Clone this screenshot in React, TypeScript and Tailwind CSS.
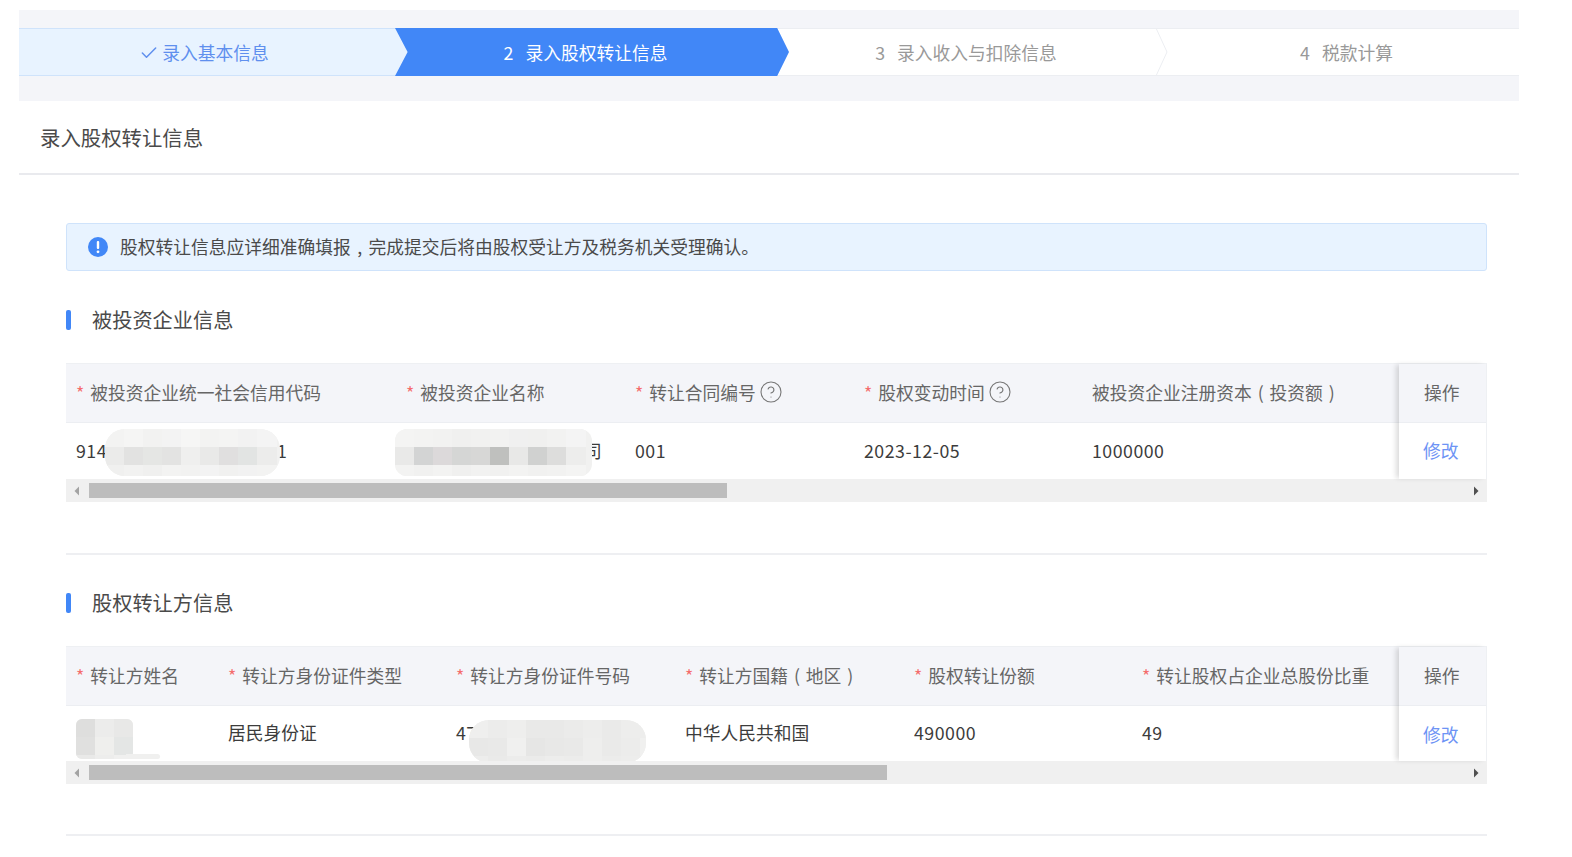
import React from 'react';
import { Check, CircleHelp } from 'lucide-react';

type Col = { label: string; width: string; required?: boolean; help?: boolean; value?: string; numeric?: boolean; mosaic?: React.ReactNode };

// pixelated patch hiding private values
const Mosaic: React.FC<{ className: string; w: number; h: number; rows: string[][]; size?: number; radius?: number }> = ({ className, w, h, rows, size = 19, radius = 20 }) => (
  <svg className={`absolute ${className}`} width={w} height={h} viewBox={`0 0 ${w} ${h}`}>
    <defs>
      <clipPath id={`m-${w}-${h}`}>
        <rect width={w} height={h} rx={radius} />
      </clipPath>
    </defs>
    <g clipPath={`url(#m-${w}-${h})`}>
      <rect width={w} height={h} fill="#f1f1f0" />
      {rows.map((row, y) =>
        row.map((c, x) => <rect key={`${x}-${y}`} x={x * size} y={y * 18} width={size + 1} height={19} fill={c} />)
      )}
    </g>
  </svg>
);

const ScrollArrow: React.FC<{ right?: boolean }> = ({ right }) => (
  <svg width="6" height="10" viewBox="0 0 6 10" className={right ? 'text-[#505050]' : 'text-[#a3a3a3]'}>
    <path d={right ? 'M1 0.5 L5.5 5 L1 9.5 Z' : 'M5 0.5 L0.5 5 L5 9.5 Z'} fill="currentColor" />
  </svg>
);

// the brackets sit centred in a full-width box in the picture
const Label: React.FC<{ text: string }> = ({ text }) => (
  <>
    {text.split(/([()])/).map((part, i) =>
      part === '(' || part === ')' ? (
        <span key={i} className="inline-block w-[1em] text-center">{part}</span>
      ) : (
        <span key={i}>{part}</span>
      )
    )}
  </>
);

const DataTable: React.FC<{ cols: Col[]; thumb: string; rowHeight: string; headHeight: string; linkOffset?: string }> = ({ cols, thumb, rowHeight, headHeight, linkOffset }) => (
  <div className="mt-[33px] border-t border-[#eef0f3]">
    <div className="flex">
      <div className="w-[1333px] overflow-hidden">
        <div className={`flex bg-[#f4f5f9] border-b border-[#eceef2] ${headHeight}`}>
          {cols.map((c) => (
            <div key={c.label} className={`${c.width} shrink-0 pl-[10px] pb-[2px] flex items-center whitespace-nowrap text-[#666666]`}>
              {c.required && <span className="text-[#f56c6c] mr-[6px]">*</span>}
              <Label text={c.label} />
              {c.help && <CircleHelp size={24} strokeWidth={1.1} className="ml-[3px] text-[#777777]" />}
            </div>
          ))}
        </div>
        <div className={`flex bg-white ${rowHeight}`}>
          {cols.map((c) => (
            <div key={c.label} className={`${c.width} shrink-0 pl-[10px] pb-[2px] relative flex items-center whitespace-nowrap text-[#3c3c3c] ${c.numeric ? 'tracking-[0.5px]' : ''}`}>
              {c.value}
              {c.mosaic}
            </div>
          ))}
        </div>
      </div>
      <div className="w-[88px] shrink-0 relative z-10 bg-white border-r border-[#eef0f3] shadow-[-4px_0_5px_-1px_rgba(0,0,0,0.14)]">
        <div className={`bg-[#f4f5f9] border-b border-[#eceef2] flex items-center pl-[25px] pb-[2px] text-[#666666] ${headHeight}`}>操作</div>
        <div className={`flex items-center pl-[24px] text-[#6d93f5] ${rowHeight} ${linkOffset ?? 'pb-[2px]'}`}>修改</div>
      </div>
    </div>
    <div className="h-[23px] bg-[#f0f0f0] flex items-center pl-[8px] pr-[8px]">
      <ScrollArrow />
      <div className="flex-1 pl-[9px] pr-[14px]">
        <div className={`h-[15px] bg-[#bdbdbd] ${thumb}`} />
      </div>
      <ScrollArrow right />
    </div>
  </div>
);

const SectionTitle: React.FC<{ text: string }> = ({ text }) => (
  <div className="flex items-center h-[20px]">
    <span className="w-[5px] h-[20px] rounded-[2px] bg-[#4187f7]" />
    <span className="ml-[21px] text-[20.2px] text-[#4a4a4a]">{text}</span>
  </div>
);

const firstCols: Col[] = [
  {
    label: '被投资企业统一社会信用代码',
    width: 'w-[330px]',
    required: true,
    numeric: true,
    value: '914',
    mosaic: (
      <>
        <span className="absolute left-[211px]">1</span>
        <Mosaic
          className="left-[39px] top-[6px]"
          w={175}
          h={47}
          rows={[
            ['#f3f3f2', '#f5f5f4', '#f2f2f1', '#f3f3f3', '#f6f6f5', '#f3f3f2', '#f4f4f3', '#f2f2f2', '#f4f4f4'],
            ['#ebebea', '#e2e2e1', '#e5e6e4', '#e3e3e2', '#efefee', '#e9e9e8', '#e0dfdf', '#e2e4e3', '#ececeb'],
            ['#f0f0ef', '#f2f2f1', '#f0f0ef', '#f3f3f2', '#f2f2f1', '#f3f3f3', '#f1f1f0', '#f2f2f2', '#f3f3f2'],
          ]}
        />
      </>
    ),
  },
  {
    label: '被投资企业名称',
    width: 'w-[229px]',
    required: true,
    mosaic: (
      <>
        <span className="absolute left-[188px]">司</span>
        <Mosaic
          className="left-[-1px] top-[6px]"
          w={197}
          h={47}
          radius={12}
          rows={[
            ['#f4f4f3', '#f3f3f2', '#f2f2f1', '#f0f0ef', '#f1f1f0', '#f2f2f1', '#f0f0f0', '#f0f0ef', '#f2f2f1', '#f4f4f4'],
            ['#e9e9e8', '#d3d4d4', '#dcd9da', '#d5d6d5', '#d7d7d6', '#bfc0be', '#e8e8e7', '#d0d1d0', '#dddddc', '#ededec'],
            ['#f3f3f2', '#f1f1f0', '#f3f3f2', '#f0f0ef', '#f2f2f1', '#f1f1f0', '#f3f3f2', '#f1f1f0', '#f2f2f1', '#f4f4f3'],
          ]}
        />
      </>
    ),
  },
  { label: '转让合同编号', width: 'w-[229px]', required: true, help: true, numeric: true, value: '001' },
  { label: '股权变动时间', width: 'w-[228px]', required: true, help: true, numeric: true, value: '2023-12-05' },
  { label: '被投资企业注册资本(投资额)', width: 'w-[320px]', numeric: true, value: '1000000' },
];

const secondCols: Col[] = [
  {
    label: '转让方姓名',
    width: 'w-[152px]',
    required: true,
    mosaic: (
      <>
        <Mosaic
          className="left-[10px] top-[13px]"
          w={57}
          h={40}
          radius={6}
          rows={[
            ['#dededd', '#ececeb', '#e8e8e7'],
            ['#e0e0df', '#efefed', '#e4e6e5'],
            ['#e9e9e8', '#ededec', '#f0f0ef'],
          ]}
        />
        <span className="absolute left-[60px] top-[48px] w-[34px] h-[5px] bg-[#f0f0ef] rounded-r-[4px]" />
      </>
    ),
  },
  { label: '转让方身份证件类型', width: 'w-[228px]', required: true, value: '居民身份证' },
  {
    label: '转让方身份证件号码',
    width: 'w-[229px]',
    required: true,
    numeric: true,
    value: '47',
    mosaic: (
      <Mosaic
        className="left-[23px] top-[14px]"
        w={177}
        h={43}
        rows={[
          ['#efefee', '#ececeb', '#eeeeed', '#e9e9e8', '#e9e9e8', '#ebebea', '#ededec', '#eaeae9', '#ededec', '#ededec'],
          ['#e8e8e7', '#e9e9e8', '#f0f0ef', '#e6e6e5', '#e8e8e7', '#e9e9e8', '#eeeeed', '#eaeae9', '#ececeb', '#f0f0ef'],
          ['#ededec', '#eaeae9', '#ececeb', '#ebebea', '#ededec', '#ececeb', '#eeeeed', '#ececeb', '#ededec', '#eeeeed'],
        ]}
      />
    ),
  },
  { label: '转让方国籍(地区)', width: 'w-[229px]', required: true, value: '中华人民共和国' },
  { label: '股权转让份额', width: 'w-[228px]', required: true, numeric: true, value: '490000' },
  { label: '转让股权占企业总股份比重', width: 'w-[267px]', required: true, numeric: true, value: '49' },
];

const App: React.FC = () => {
  return (
    <div className="min-h-screen bg-white pt-[10px] pl-[19px] text-[17.75px] font-['Noto_Sans_CJK_SC','Noto_Sans',sans-serif]">
      <div className="w-[1500px]">
        {/* Steps */}
        <div className="bg-[#f4f5f9] pt-[18px] pb-[25px]">
          <div className="flex h-[48px]">
            <div className="w-[389px] shrink-0 bg-[#e8f3ff] border-y border-[#cfe3fb] flex items-center justify-center pt-[1px] pr-[19px] text-[#5f8fee]">
              <Check size={20} strokeWidth={1.8} className="mr-[3px]" />
              录入基本信息
            </div>
            <div className="w-[394px] shrink-0 -ml-[13px] relative z-10 bg-[#4187f7] text-white flex items-center justify-center pt-[1px] pr-[13px] [clip-path:polygon(0_0,97%_0,100%_50%,97%_100%,0_100%,3.2%_50%)]">
              <span className="mr-[12px]">2</span>录入股权转让信息
            </div>
            <div className="w-[392px] shrink-0 -ml-[13px] relative bg-white border-y border-[#eceef2] flex items-center justify-center pt-[1px] pr-[12px] text-[#999999]">
              <span className="mr-[12px]">3</span>录入收入与扣除信息
              <svg className="absolute right-0 top-[-1px]" width="13" height="48" viewBox="0 0 13 48" fill="none">
                <path d="M1 0 L12 24 L1 48" stroke="#eceef2" />
              </svg>
            </div>
            <div className="flex-1 bg-white border-y border-[#eceef2] flex items-center justify-center pt-[1px] pl-[6px] text-[#999999]">
              <span className="mr-[12px]">4</span>税款计算
            </div>
          </div>
        </div>

        {/* Page title */}
        <div className="h-[74px] border-b-2 border-[#e9eaee] flex items-center pt-[1px] pl-[21px] text-[20.4px] text-[#4a4a4a]">录入股权转让信息</div>

        <div className="pl-[47px] pr-[32px] pt-[48px]">
          <div className="h-[48px] rounded-[3px] bg-[#e8f3ff] border border-[#cfe3fb] flex items-center pl-[21px] text-[#4a4a4a]">
            <svg width="20" height="20" viewBox="0 0 20 20">
              <circle cx="10" cy="10" r="10" fill="#4187f7" />
              <rect x="8.8" y="4" width="2.4" height="8" rx="1" fill="#ffffff" />
              <circle cx="10" cy="14.8" r="1.4" fill="#ffffff" />
            </svg>
            <span className="ml-[12px] pb-[2px]">
              股权转让信息应详细准确填报<span className="inline-block w-[1em] text-center">,</span>完成提交后将由股权受让方及税务机关受理确认。
            </span>
          </div>

          <div className="mt-[39px]">
            <SectionTitle text="被投资企业信息" />
            <DataTable cols={firstCols} thumb="w-[638px]" headHeight="h-[59px]" rowHeight="h-[56px]" />
          </div>

          <div className="mt-[51px] border-t-2 border-[#eeeff2] pt-[38px]">
            <SectionTitle text="股权转让方信息" />
            <DataTable cols={secondCols} thumb="w-[798px]" headHeight="h-[59px]" rowHeight="h-[55px]" linkOffset="pt-[1px]" />
          </div>

          <div className="mt-[50px] border-t-2 border-[#eeeff2]" />
        </div>
      </div>
    </div>
  );
};

export default App;
